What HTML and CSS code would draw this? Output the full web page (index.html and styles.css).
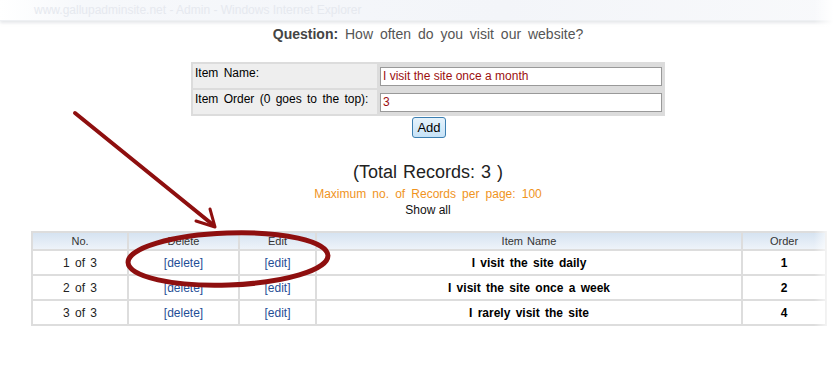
FILE: index.html
```html
<!DOCTYPE html>
<html lang="en">
<head>
    <meta charset="UTF-8">
    <title>Admin - Poll Items</title>
    <link rel="stylesheet" href="styles.css">
</head>
<body>
    <div class="titlebar">
        <span class="titlebar-text">www.gallupadminsite.net - Admin - Windows Internet Explorer</span>
    </div>

    <div class="page">
        <p class="question"><b>Question:</b> How often do you visit our website?</p>

        <form class="item-form">
            <table class="form-table">
                <tr>
                    <td class="form-label">Item Name:</td>
                    <td class="form-field"><input type="text" value="I visit the site once a month"></td>
                </tr>
                <tr>
                    <td class="form-label">Item Order (0 goes to the top):</td>
                    <td class="form-field"><input type="text" value="3"></td>
                </tr>
            </table>
            <div class="form-actions">
                <button type="button">Add</button>
            </div>
        </form>

        <div class="records">
            <h2>(Total Records: 3 )</h2>
            <div class="per-page">Maximum no. of Records per page: 100</div>
            <div class="show-all">Show all</div>
        </div>

        <table class="items">
            <thead>
                <tr>
                    <th class="col-no">No.</th>
                    <th class="col-del">Delete</th>
                    <th class="col-edit">Edit</th>
                    <th class="col-name">Item Name</th>
                    <th class="col-order">Order</th>
                </tr>
            </thead>
            <tbody>
                <tr>
                    <td>1 of 3</td>
                    <td><a href="#">[delete]</a></td>
                    <td><a href="#">[edit]</a></td>
                    <td class="name">I visit the site daily</td>
                    <td class="order">1</td>
                </tr>
                <tr>
                    <td>2 of 3</td>
                    <td><a href="#">[delete]</a></td>
                    <td><a href="#">[edit]</a></td>
                    <td class="name">I visit the site once a week</td>
                    <td class="order">2</td>
                </tr>
                <tr>
                    <td>3 of 3</td>
                    <td><a href="#">[delete]</a></td>
                    <td><a href="#">[edit]</a></td>
                    <td class="name">I rarely visit the site</td>
                    <td class="order">4</td>
                </tr>
            </tbody>
        </table>
    </div>

    <div class="fade-right"></div>

    <!-- annotation drawn over the screenshot -->
    <svg class="annotation" width="838" height="387" viewBox="0 0 838 387">
        <line x1="75" y1="113" x2="212" y2="224" stroke="#8e0f0f" stroke-width="4" stroke-linecap="round"/>
        <path d="M196 221 L215 227 L210 209" fill="none" stroke="#8e0f0f" stroke-width="3" stroke-linecap="round" stroke-linejoin="round"/>
        <ellipse cx="228" cy="259" rx="100" ry="26" transform="rotate(-2 228 259)" fill="none" stroke="#8e0f0f" stroke-width="5"/>
    </svg>
</body>
</html>
```

FILE: styles.css
```css
body {
    margin: 0;
    font-family: "Liberation Sans", Arial, sans-serif;
    background: #fff;
    color: #000;
    position: relative;
    height: 387px;
    overflow: hidden;
}
.titlebar {
    height: 20px;
    background: linear-gradient(to right, #fff 0%, #f6f8fb 10%, #f3f5f9 60%, #f8f9fb 100%);
    box-shadow: 0 2px 3px rgba(180, 185, 195, 0.35);
    border-bottom: 1px solid #eef0f3;
}
.titlebar-text {
    display: block;
    padding: 3px 0 0 34px;
    font-size: 12px;
    color: #e6e9ef;
}
.page {
    padding-left: 18px;
    text-align: center;
}
.question {
    margin: 5px 0 0;
    font-size: 14px;
    color: #555;
    word-spacing: 3px;
}
.question b {
    color: #444;
}
.item-form {
    margin-top: 20px;
}
.form-table {
    margin: 0 auto;
    background: #dcdcdc;
    border-spacing: 2px;
    font-size: 12px;
    word-spacing: 2px;
}
.form-label {
    background: #eeeeee;
    width: 180px;
    height: 20px;
    padding: 2px;
    vertical-align: top;
    text-align: left;
}
.form-field {
    padding: 0 1px;
    vertical-align: middle;
}
.form-field input {
    width: 282px;
    height: 19px;
    box-sizing: border-box;
    border: 1px solid #999;
    padding: 1px 2px;
    font-family: "Liberation Sans", Arial, sans-serif;
    font-size: 12px;
    color: #9c0f0f;
    margin: 0;
}
.form-actions {
    margin-top: 1px;
    padding-left: 2px;
}
.form-actions button {
    font-family: "Liberation Sans", Arial, sans-serif;
    font-size: 13px;
    height: 21px;
    padding: 0 4px;
    background: linear-gradient(#e6f3fc, #c6e2f7);
    border: 1px solid #3c7fb1;
    border-radius: 3px;
    color: #000;
}
.records {
    margin-top: 24px;
}
.records h2 {
    margin: 0;
    font-size: 18px;
    font-weight: normal;
    color: #222;
    word-spacing: 1px;
}
.per-page {
    margin-top: 4px;
    font-size: 12px;
    color: #f0941d;
    word-spacing: 2.8px;
}
.show-all {
    margin-top: 2px;
    font-size: 12px;
    color: #111;
}
.items {
    margin: 14px 0 0 13px;
    width: 796px;
    border-collapse: collapse;
    border: 2px solid #dddddd;
    font-size: 12px;
    word-spacing: 2px;
}
.items th,
.items td {
    border: 2px solid #dddddd;
    text-align: center;
}
.items th {
    height: 16px;
    padding: 0;
    font-size: 11px;
    font-weight: normal;
    color: #333;
    background: linear-gradient(#d6e3f1, #eef3f9);
    word-spacing: 1px;
}
.items td {
    height: 23px;
    padding: 0;
    color: #222;
}
.items a {
    color: #1f4e96;
    text-decoration: none;
    word-spacing: 0;
}
.col-no { width: 94px; }
.col-del { width: 109px; }
.col-edit { width: 75px; }
.col-name { width: 424px; }
.items td.name,
.items td.order {
    font-weight: bold;
    color: #000;
}
.fade-right {
    position: absolute;
    top: 0;
    right: 0;
    width: 24px;
    height: 387px;
    background: linear-gradient(to right, rgba(255, 255, 255, 0), #fff 80%);
}
.annotation {
    position: absolute;
    top: 0;
    left: 0;
}
```
